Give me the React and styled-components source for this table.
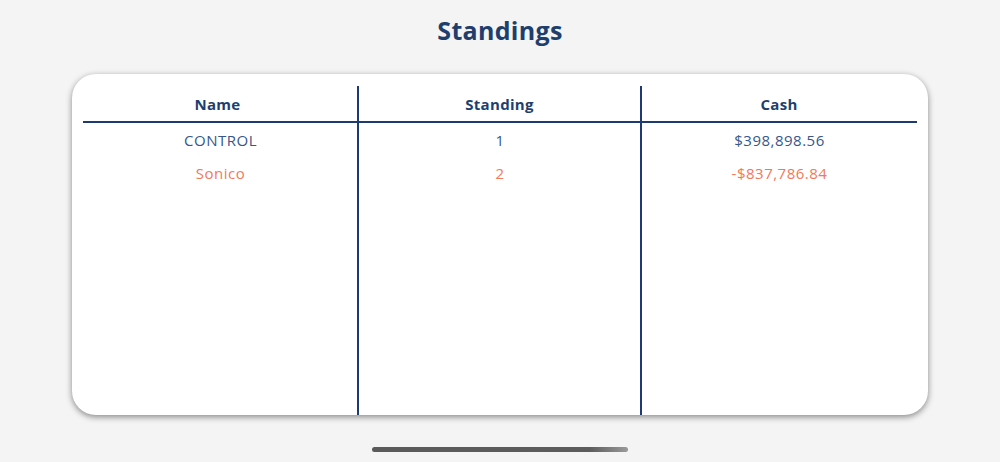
import React from "react";
import styled, { createGlobalStyle } from "styled-components";

const GlobalStyle = createGlobalStyle`
  html, body {
    margin: 0;
    padding: 0;
    background: #f4f4f4;
    font-family: "Open Sans", "Liberation Sans", sans-serif;
  }
`;

const Page = styled.div`
  width: 1000px;
  height: 462px;
  display: flex;
  flex-direction: column;
  align-items: center;
  box-sizing: border-box;
  padding-top: 13px;
`;

const Title = styled.h1`
  margin: 0;
  font-size: 25px;
  line-height: 34px;
  font-weight: 700;
  color: #1e3f6e;
  letter-spacing: 0.3px;
`;

const Card = styled.div`
  margin-top: 27px;
  width: 856px;
  height: 341px;
  box-sizing: border-box;
  background: #fff;
  border-radius: 24px;
  box-shadow: 0 2px 6px rgba(0, 0, 0, 0.45);
  padding: 12px 11px 0;
  display: grid;
  grid-template-columns: 275px 283px 276px;
`;

const Column = styled.div`
  display: flex;
  flex-direction: column;
  border-left: ${({ $first }) => ($first ? "none" : "2px solid #1e3a72")};
  margin-left: ${({ $first }) => ($first ? "0" : "-1px")};
`;

const HeadCell = styled.div`
  height: 37px;
  border-bottom: 2px solid #1e3a72;
  display: flex;
  align-items: center;
  justify-content: center;
  font-size: 15px;
  font-weight: 700;
  color: #1e3f6e;
  letter-spacing: 0.3px;
  box-sizing: border-box;
  margin-left: ${({ $first }) => ($first ? "0" : "-1px")};
  padding-right: ${({ $shift }) => $shift || 0}px;
`;

const Cell = styled.div`
  height: 33px;
  display: flex;
  align-items: center;
  justify-content: center;
  font-size: 15px;
  font-weight: 400;
  letter-spacing: 0.5px;
  color: ${({ $bad }) => ($bad ? "#f2785c" : "#36578a")};
  &:first-of-type {
    margin-top: 4px;
  }
`;

const HomeBar = styled.div`
  margin-top: 32px;
  width: 256px;
  height: 5px;
  border-radius: 3px;
  background: linear-gradient(90deg, #5a5a5a 0%, #5c5c5c 85%, #9a9a9a 100%);
`;

const rows = [
  { name: "CONTROL", standing: "1", cash: "$398,898.56", bad: false },
  { name: "Sonico", standing: "2", cash: "-$837,786.84", bad: true },
];

const columns = [
  { title: "Name", key: "name", shift: 6 },
  { title: "Standing", key: "standing", shift: 0 },
  { title: "Cash", key: "cash", shift: 0 },
];

export default function App() {
  return (
    <>
      <GlobalStyle />
      <Page>
        <Title>Standings</Title>
        <Card>
          {columns.map((col, i) => (
            <Column key={col.key} $first={i === 0}>
              <HeadCell $first={i === 0} $shift={col.shift}>
                {col.title}
              </HeadCell>
              {rows.map((r) => (
                <Cell key={r.name} $bad={r.bad}>
                  {r[col.key]}
                </Cell>
              ))}
            </Column>
          ))}
        </Card>
        <HomeBar />
      </Page>
    </>
  );
}
